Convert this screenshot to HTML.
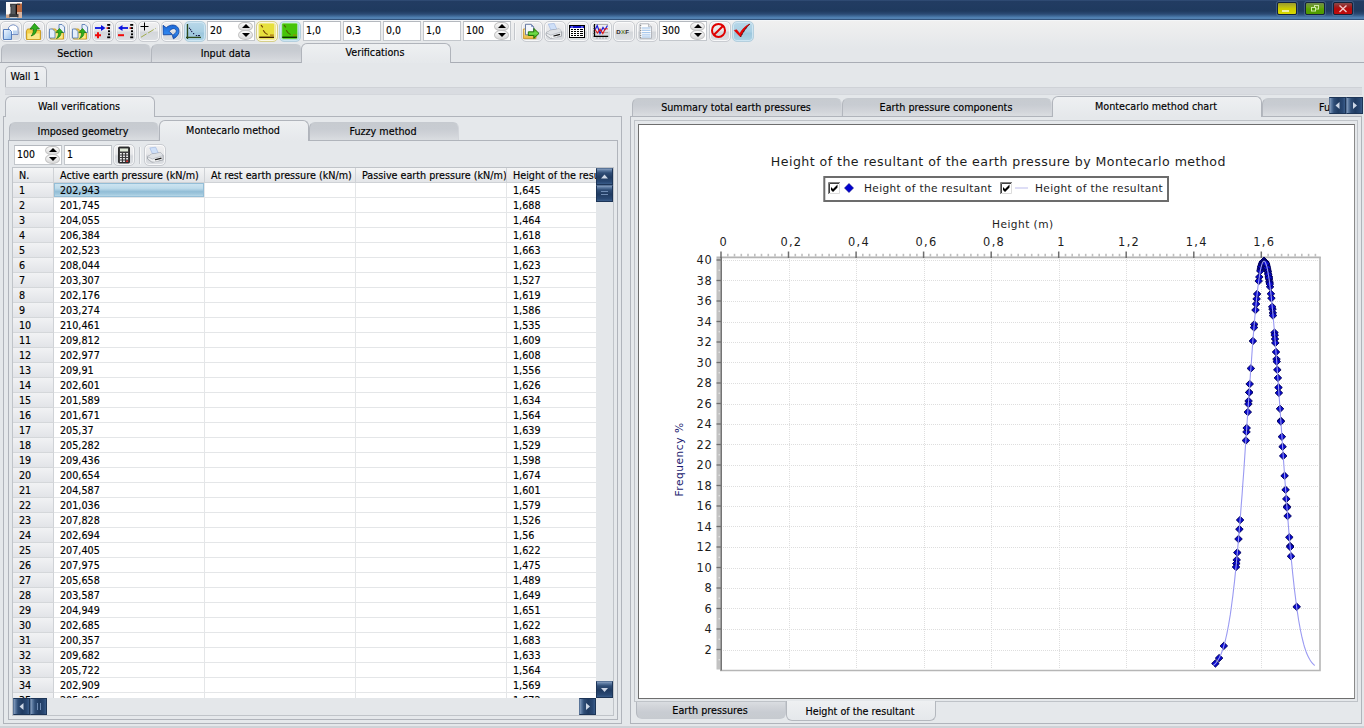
<!DOCTYPE html>
<html lang="en"><head><meta charset="utf-8"><title>Wall verifications - Montecarlo method</title>
<style>
*{box-sizing:border-box;margin:0;padding:0}
html,body{width:1364px;height:728px;overflow:hidden;background:#e4e7eb}
body{font-family:"DejaVu Sans Condensed","Liberation Sans",sans-serif;font-size:10.7px;color:#000;-webkit-text-stroke:.15px #000}
#app{position:relative;width:1364px;height:728px;overflow:hidden;background:#e4e7ea}
.abs{position:absolute}
/* title bar */
#title{position:absolute;left:0;top:0;width:1364px;height:20px;background:linear-gradient(#34507a 0,#223c62 1.500px,#1f3a5f 11px,#2b4a74 14px,#4877a8 17px,#5a8bbd 18.300px,#33557f 19.300px,#2f5078 20px)}
#tline{position:absolute;left:0;top:20px;width:1364px;height:1px;background:#f4f6f8}
.wb{position:absolute;top:2px;width:20px;height:13px;border:1px solid #14233a;border-radius:2px;box-shadow:0 0 0 1px rgba(120,150,190,.35)}
/* toolbar */
#tbbg{position:absolute;left:0;top:21px;width:1364px;height:28px;background:linear-gradient(#f0f0f0,#e4e7ea)}
.tb{position:absolute;top:21px;width:22px;height:21px;border:1px solid #c9ccd1;border-radius:5px;background:linear-gradient(#f0f0f1 0,#e7e8ea 45%,#d4d7db 55%,#dcdfe3 100%);box-shadow:inset 0 0 0 1px rgba(255,255,255,.75)}
.tb.on{background:linear-gradient(#b9d8e9 0,#a9cfe3 50%,#9dc7dd 60%,#acd2e5 100%);border-color:#b4cfde;box-shadow:inset 0 0 0 1px rgba(220,238,248,.7)}
.tb svg{position:absolute;left:0;top:0}
.inp{position:absolute;background:#fff;border:1px solid #c3c7cc;border-top-color:#b4b8be;height:20px;line-height:17px;padding-left:2px;font-size:10.4px;color:#000}
.spin{position:absolute;width:15px;height:10px;border:1px solid #c4c4c4;border-radius:7px/5px;background:linear-gradient(#fcfcfc,#d8d8d8)}
.spin:after{content:"";position:absolute;left:2.5px;top:2px;border:4px solid transparent}
.spin.up:after{border-bottom:4.5px solid #000;border-top:0;top:1px}
.spin.dn:after{border-top:4.5px solid #000;border-bottom:0;top:2px}
/* tabs */
.tab{position:absolute;text-align:center;border:1px solid #c6cad0;border-left-color:#b3b7be;border-right-color:#d3d6db;border-bottom:none;border-radius:6px 6px 0 0;background:linear-gradient(#c7cbd0 0,#c8ccd2 35%,#d1d4d9 70%,#dadde1 100%);color:#000;white-space:nowrap;overflow:hidden;padding-right:2px}
.tab.sel{background:linear-gradient(#eef0f2,#e5e8eb);border-color:#b0b4bb}
.hline{position:absolute;height:1px;background:#a9adb5}
.vline{position:absolute;width:1px;background:#b4b8be}
.pane{position:absolute;border:1px solid #b0b4bb;background:#e5e8eb}
/* table */
#grid{position:absolute;left:13px;top:168px;width:583px;height:530px;background:#fff;overflow:hidden}
#ghead{position:absolute;left:0;top:0;width:583px;height:15px;background:linear-gradient(#f4f5f6,#e3e5e8);border-bottom:1px solid #cfd2d6}
#ghead div{position:absolute;top:0;height:15px;line-height:16px;padding-left:6px;border-right:1px solid #cfd2d6;white-space:nowrap;overflow:hidden}
#gbody{position:absolute;left:0;top:15px;width:583px;height:515px;overflow:hidden}
.tr{position:absolute;left:0;width:583px;height:15px}
.tr div{position:absolute;top:0;height:15px;line-height:16px;padding-left:6px;border-right:1px solid #e4e6e8;border-bottom:1px solid #e4e6e8;white-space:nowrap;overflow:hidden}
.c0{left:0;width:41px;background:linear-gradient(#f1f2f4,#e2e4e8);border-right-color:#cfd2d6 !important;border-bottom-color:#d4d7da !important}
.c1{left:41px;width:151px}
.c2{left:192px;width:151px}
.c3{left:343px;width:151px}
.c4{left:494px;width:89px;border-right:none !important}
.cs{background:linear-gradient(#d0e6f2 0,#bddbeb 38%,#92bdd6 62%,#a2c9de 80%,#c2dfee 100%);box-shadow:inset 0 0 0 1px #94bed7}
/* scrollbars */
.sbtn{position:absolute;width:16px;height:16px;background:linear-gradient(#859cbc 0,#5c7aa1 10%,#2f4d76 26%,#203b61 55%,#294873 85%,#3a5c89 100%);border:1px solid #1d3557;border-top-color:#5a7599}

.sbh{background:linear-gradient(90deg,#859cbc 0,#5c7aa1 10%,#2f4d76 26%,#203b61 55%,#294873 85%,#3a5c89 100%);border-top-color:#1d3557;border-left-color:#5a7599}

</style></head>
<body>
<div id="app">
<div id="title"></div><div id="tline"></div>
<svg class="abs" style="left:6px;top:2px" width="16" height="16" viewBox="0 0 16 16">
<rect x="0" y="0" width="16" height="16" fill="#fbfaf9"/>
<rect x="11" y="1.500" width="5" height="9" fill="#b9683f"/>
<rect x="11" y="10" width="5" height="6" fill="#d9b49e"/>
<rect x="0" y="12.500" width="4" height="3.500" fill="#cfa78c"/>
<path d="M4 1.700h10v1.300h-3.500V12h2v3.200H3.300V12l1.200-.500V5H4.200z" fill="#3a3d40"/>
<rect x="5.500" y="3" width="3.500" height="9" fill="#55595c"/>
<rect x="10" y="2.500" width="1" height="10" fill="#1a0c08"/>
</svg>
<div class="wb" style="left:1277px;background:linear-gradient(#9a9a2a 0,#b7b71a 30%,#caca00 50%,#d8d800 100%)"><div class="abs" style="left:4px;top:7px;width:7px;height:2px;background:#f0f0a8"></div></div>
<div class="wb" style="left:1305px;background:linear-gradient(#6f8a4a 0,#6aa01c 35%,#58a000 55%,#4f9a00 100%)">
<svg class="abs" style="left:0;top:0" width="18" height="11" viewBox="0 0 18 11"><rect x="8.5" y="2.5" width="4" height="3.5" fill="none" stroke="#cfe8a8" stroke-width="1"/><rect x="5.5" y="4.5" width="4" height="3.5" fill="#4f9a00" stroke="#cfe8a8" stroke-width="1"/></svg></div>
<div class="wb" style="left:1333px;background:linear-gradient(#8a4a4a 0,#a01c1c 35%,#b40a0a 55%,#c00c0c 100%)">
<svg class="abs" style="left:0;top:0" width="18" height="11" viewBox="0 0 18 11"><path d="M5.5 2.5l7 6.5M12.5 2.5l-7 6.5" stroke="#f3c9c9" stroke-width="1.4" fill="none"/></svg></div>

<div id="tbbg"></div>
<div class="tb" style="left:0px;top:21px;"><svg width="22" height="21" viewBox="0 0 22 21" style="left:-1px;top:-1px"><defs><linearGradient id="pg" x1="0" y1="0" x2="1" y2="1"><stop offset="0" stop-color="#f4f8fe"/><stop offset="1" stop-color="#8fbcec"/></linearGradient></defs><path d="M8.5 13.5V6.5Q13 1 18 6.5v7z" fill="#fff" stroke="#6a86bd" stroke-width=".9"/><path d="M13 9.5h4v3.5h-4z" fill="#bcd4f0"/><path d="M3.5 8.5h6l2 2v8h-8z" fill="url(#pg)" stroke="#4a74b8" stroke-width=".9"/></svg></div>
<div class="tb" style="left:23px;top:21px;"><svg width="22" height="21" viewBox="0 0 22 21" style="left:-1px;top:-1px"><path d="M3.5 10l1-2h4l1 1.5h8v9.0h-14z" fill="#f3d04a" stroke="#c9991a" stroke-width=".9"/><rect x="4.5" y="12.5" width="12" height="5.5" fill="#fbe88a"/><path d="M11.5 2.5l5 5.5h-3c0 4-2 6-5.5 7 2-2 2.5-4 2.5-7h-3.5z" fill="#2fae1e" stroke="#167a0c" stroke-width=".8"/></svg></div>
<div class="tb" style="left:46px;top:21px;"><svg width="22" height="21" viewBox="0 0 22 21" style="left:-1px;top:-1px"><path d="M4.5 10l1-2h4l1 1.5h7v8.5h-13z" fill="#f3d04a" stroke="#c9991a" stroke-width=".9"/><rect x="5.5" y="12.5" width="11" height="5" fill="#fbe88a"/><path d="M13 3.5h3.0l2.5 2.5v5.5h-5.5z" fill="#e8f0fb" stroke="#5b7fb5" stroke-width=".9"/><path d="M3.5 8h3.0l2.5 2.5v6.5h-5.5z" fill="#e4eefb" stroke="#5b7fb5" stroke-width=".9"/><path d="M13.5 7.5l3.5 4h-2c0 3-1.5 5-4.5 6 1.5-1.5 2-3.5 2-6h-2.5z" fill="#2fae1e" stroke="#167a0c" stroke-width=".7"/></svg></div>
<div class="tb" style="left:69px;top:21px;"><svg width="22" height="21" viewBox="0 0 22 21" style="left:-1px;top:-1px"><path d="M4.5 10l1-2h4l1 1.5h7v8.5h-13z" fill="#f3d04a" stroke="#c9991a" stroke-width=".9"/><rect x="5.5" y="12.5" width="11" height="5" fill="#fbe88a"/><path d="M13 3.5h3.0l2.5 2.5v5.5h-5.5z" fill="#e8f0fb" stroke="#5b7fb5" stroke-width=".9"/><path d="M3.5 8h3.0l2.5 2.5v6.5h-5.5z" fill="#e4eefb" stroke="#5b7fb5" stroke-width=".9"/><path d="M13.5 7.5l3.5 4h-2c0 3-1.5 5-4.5 6 1.5-1.5 2-3.5 2-6h-2.5z" fill="#2fae1e" stroke="#167a0c" stroke-width=".7"/></svg></div>
<div class="tb" style="left:92px;top:21px;"><svg width="22" height="21" viewBox="0 0 22 21" style="left:-1px;top:-1px"><path d="M3 7h8" stroke="#0a14e0" stroke-width="1.8"/><path d="M9 4l4.5 3L9 10z" fill="#0a14e0"/><path d="M3 14.2h6M6 11.2v6" stroke="#f00a0a" stroke-width="2"/><rect x="14.6" y="6.2" width="1.8" height="1.8" fill="#d01010"/><rect x="15.2" y="3" width="3" height="1.8" fill="#000"/><rect x="16" y="6.2" width="2" height="1.8" fill="#000"/><rect x="16" y="9.3" width="2" height="1.8" fill="#000"/><rect x="16" y="12.4" width="2" height="1.8" fill="#000"/><rect x="15.2" y="15.4" width="3" height="1.8" fill="#000"/></svg></div>
<div class="tb" style="left:115px;top:21px;"><svg width="22" height="21" viewBox="0 0 22 21" style="left:-1px;top:-1px"><path d="M5 7h8" stroke="#0a14e0" stroke-width="1.8"/><path d="M7.5 4L3 7l4.5 3z" fill="#0a14e0"/><path d="M3 14.2h6" stroke="#f00a0a" stroke-width="2"/><rect x="14.6" y="6.2" width="1.8" height="1.8" fill="#d01010"/><rect x="15.2" y="3" width="3" height="1.8" fill="#000"/><rect x="16" y="6.2" width="2" height="1.8" fill="#000"/><rect x="16" y="9.3" width="2" height="1.8" fill="#000"/><rect x="16" y="12.4" width="2" height="1.8" fill="#000"/><rect x="15.2" y="15.4" width="3" height="1.8" fill="#000"/></svg></div>
<div class="tb" style="left:138px;top:21px;"><svg width="22" height="21" viewBox="0 0 22 21" style="left:-1px;top:-1px"><path d="M2.500 5.500h8M6.500 1.500v8" stroke="#000" stroke-width="1"/><path d="M3 16.200L17.800 7.300" stroke="#9aa63c" stroke-width=".9" stroke-dasharray="6.500 1.800"/></svg></div>
<div class="tb" style="left:161px;top:21px;"><svg width="22" height="21" viewBox="0 0 22 21" style="left:-1px;top:-1px"><defs><linearGradient id="ug" x1="0" y1="0" x2="0" y2="1"><stop offset="0" stop-color="#1a66d6"/><stop offset=".6" stop-color="#2f86ee"/><stop offset="1" stop-color="#1458c4"/></linearGradient></defs><path d="M2 4.300L2.300 13.800L11.500 13.600L8.200 10.400C10 7.600 13.600 6.600 15 9C16 11 14 13 11.400 14.400L12.400 17.800C17 15.500 19 11 17.500 7.500C15.500 3.300 9.500 2.800 5.200 6.700z" fill="url(#ug)" stroke="#0a3f9e" stroke-width=".8" stroke-linejoin="round"/></svg></div>
<div class="tb on" style="left:184px;top:21px;"><svg width="22" height="21" viewBox="0 0 22 21" style="left:-1px;top:-1px"><path d="M3.500 3v15" stroke="#2f4a1a" stroke-width="1.300"/><path d="M2 16.400h15" stroke="#2f4a1a" stroke-width="1.300"/><rect x="4.900" y="6.700" width="1.200" height="1.200" fill="#1a1a4a"/><rect x="6" y="8.100" width="1.200" height="1.200" fill="#1a1a4a"/><rect x="7.100" y="9.900" width="1.200" height="1.200" fill="#1a1a4a"/><rect x="9" y="12" width="1.200" height="1.200" fill="#1a1a4a"/><rect x="11.800" y="14" width="1.200" height="1.100" fill="#1a1a4a"/><rect x="13.800" y="14" width="2.200" height="1.100" fill="#1a1a4a"/></svg></div>
<div class="inp" style="left:207px;top:21px;width:48px">20</div><div class="spin up" style="left:238px;top:22px;height:9px"></div><div class="spin dn" style="left:238px;top:30px;height:10px"></div>
<div class="tb" style="left:256px;top:21px;background:#efe79a;border-color:#d6cf8a"><svg width="22" height="21" viewBox="0 0 22 21" style="left:-1px;top:-1px"><rect x="2.600" y="1.800" width="16" height="16.400" rx="1.500" fill="#f6f3c0"/><rect x="3.200" y="2.400" width="15" height="15.400" rx="1" fill="#e7e03c"/><path d="M5 4L6.800 6.400M7.200 9.200Q9 12.500 11.600 13.600" stroke="#6a3a00" stroke-width="1.100" fill="none"/><path d="M14 14.100h3.800" stroke="#a86a10" stroke-width="1.100"/><path d="M3.200 16.300H18" stroke="#3a1a00" stroke-width="1.400"/></svg></div>
<div class="tb on" style="left:279px;top:21px;"><svg width="22" height="21" viewBox="0 0 22 21" style="left:-1px;top:-1px"><rect x="2.600" y="1.800" width="16" height="16.400" rx="1.500" fill="#bfeeb0"/><rect x="3.200" y="2.400" width="15" height="15.400" rx="1" fill="#46c40a"/><path d="M5 4L6.800 6.400M7.200 9.200Q9 12.500 11.600 13.600" stroke="#4a5a00" stroke-width="1.100" fill="none"/><path d="M14 14.100h3.800" stroke="#a08a00" stroke-width="1.100"/><path d="M3.200 16.300H18" stroke="#0a3600" stroke-width="1.400"/></svg></div>
<div class="inp" style="left:303px;top:21px;width:38px">1,0</div>
<div class="inp" style="left:343px;top:21px;width:38px">0,3</div>
<div class="inp" style="left:383px;top:21px;width:38px">0,0</div>
<div class="inp" style="left:423px;top:21px;width:38px">1,0</div>
<div class="inp" style="left:463px;top:21px;width:48px">100</div><div class="spin up" style="left:494px;top:22px;height:9px"></div><div class="spin dn" style="left:494px;top:30px;height:10px"></div>
<div class="abs" style="left:514px;top:23px;width:1px;height:17px;background:#c4c7cc"></div><div class="abs" style="left:515px;top:23px;width:1px;height:17px;background:#f6f7f8"></div>
<div class="tb" style="left:521px;top:21px;"><svg width="22" height="21" viewBox="0 0 22 21" style="left:-1px;top:-1px"><defs><linearGradient id="fg" x1="0" y1="0" x2="0" y2="1"><stop offset="0" stop-color="#fbf0b8"/><stop offset="1" stop-color="#eab63a"/></linearGradient><linearGradient id="gg" x1="0" y1="0" x2="0" y2="1"><stop offset="0" stop-color="#3faa1a"/><stop offset=".5" stop-color="#6fdc48"/><stop offset="1" stop-color="#2f9a12"/></linearGradient></defs><path d="M2.400 8h3l1 1.500H15V17.600H2.400z" fill="url(#fg)" stroke="#c8962a" stroke-width=".9"/><path d="M4.500 3.300h5.700l2.500 2.500v8H4.500z" fill="#f4f7fc" stroke="#5a6e9a" stroke-width=".9"/><path d="M10.200 3.300v2.500h2.500z" fill="#6a82b8"/><path d="M7.300 10.800h5.500V7.400l5.200 5-5.200 5V14.500H7.300z" fill="url(#gg)" stroke="#1a6a00" stroke-width=".9" stroke-linejoin="round"/></svg></div>
<div class="tb" style="left:544px;top:21px;"><svg width="22" height="21" viewBox="0 0 22 21" style="left:-1px;top:-1px"><path d="M4.300 3.100L10.200 2.400L12.800 8.300L6.900 9z" fill="#cfe0f8" stroke="#9ab4e0" stroke-width=".6"/><path d="M2.100 11.900L6.200 9.400L15.300 7.900L17.500 10.500V15.200L6.500 17.400L2.100 14.200z" fill="#eef0f2" stroke="#8c9098" stroke-width=".7"/><path d="M6.200 9.400L15.300 7.900L17.500 10.500L6.800 13.900L2.100 11.900z" fill="#dfe2e6"/><path d="M2.100 11.900L6.800 14.200L17.500 10.800" fill="none" stroke="#a0a4ac" stroke-width=".6"/><path d="M9.500 15.100L16 13.300" stroke="#1a1a1a" stroke-width="1.300"/><path d="M8 16.600l5-.9" stroke="#fff" stroke-width=".8"/></svg></div>
<div class="tb" style="left:567px;top:21px;"><svg width="22" height="21" viewBox="0 0 22 21" style="left:-1px;top:-1px"><rect x="2.500" y="4.500" width="15" height="12" fill="#fff" stroke="#000" stroke-width="1"/><rect x="3" y="5" width="14" height="2" fill="#1010c8"/><rect x="4" y="5.500" width="2" height="1" fill="#a8b8ff"/><rect x="14" y="5.500" width="2" height="1" fill="#a8b8ff"/><rect x="4" y="8" width="2" height="1" fill="#000"/><rect x="7" y="8" width="2" height="1" fill="#000"/><rect x="10" y="8" width="2" height="1" fill="#000"/><rect x="13" y="8" width="3" height="1" fill="#000"/><rect x="4" y="10" width="2" height="1" fill="#000"/><rect x="7" y="10" width="2" height="1" fill="#000"/><rect x="10" y="10" width="2" height="1" fill="#000"/><rect x="13" y="10" width="3" height="1" fill="#000"/><rect x="4" y="12" width="2" height="1" fill="#000"/><rect x="7" y="12" width="2" height="1" fill="#000"/><rect x="10" y="12" width="2" height="1" fill="#000"/><rect x="13" y="12" width="3" height="1" fill="#000"/><rect x="4" y="14" width="2" height="1" fill="#000"/><rect x="7" y="14" width="2" height="1" fill="#000"/><rect x="10" y="14" width="2" height="1" fill="#000"/><rect x="13" y="14" width="3" height="1" fill="#000"/></svg></div>
<div class="tb" style="left:590px;top:21px;"><svg width="22" height="21" viewBox="0 0 22 21" style="left:-1px;top:-1px"><path d="M4.500 3v12.800M3.600 15.300h14.600" stroke="#000" stroke-width="1.200"/><path d="M3 5h1.500M3 7.500h1.500M3 10h1.500M3 12.500h1.500M7 16.500v1M10 16.500v1M13 16.500v1M16 16.500v1" stroke="#555" stroke-width=".7"/><path d="M5 3.500h13M5 11.500h13" stroke="#a0a0a0" stroke-width=".8"/><path d="M5 9l2.200-4.500 2.800 8 3-6 1.800 2.500 2.700-4.500" stroke="#1a1ad8" stroke-width="1.200" fill="none"/><path d="M5 8.500l2.500 3.500 2.500-4 2.800 4.500 2.500-5 2.500.500" stroke="#e01a1a" stroke-width="1.100" fill="none"/></svg></div>
<div class="tb" style="left:613px;top:21px;"><svg width="22" height="21" viewBox="0 0 22 21" style="left:-1px;top:-1px"><text x="9.800" y="12.800" text-anchor="middle" font-family="Liberation Sans,sans-serif" font-size="6.200" font-weight="bold" letter-spacing=".3"><tspan fill="#2a2a2a">D</tspan><tspan fill="#6a8a3a">X</tspan><tspan fill="#2a2a2a">F</tspan></text></svg></div>
<div class="tb" style="left:636px;top:21px;"><svg width="22" height="21" viewBox="0 0 22 21" style="left:-1px;top:-1px"><path d="M4 2.800h8.500l3 3v11.500H4z" fill="#fdfdfd" stroke="#a4a8b0" stroke-width=".8"/><path d="M12.500 2.800v3h3" fill="#e4e4e4" stroke="#a4a8b0" stroke-width=".7"/><path d="M5.800 7h8.700" stroke="#a8c8ec" stroke-width="1.200"/><path d="M5.800 9.3h8.700" stroke="#a8c8ec" stroke-width="1.200"/><path d="M5.800 11.6h8.700" stroke="#a8c8ec" stroke-width="1.200"/><path d="M5.800 13.9h8.700" stroke="#a8c8ec" stroke-width="1.200"/><path d="M5.800 16h8.700" stroke="#a8c8ec" stroke-width="1.200"/><rect x="4" y="4" width="1.200" height="1" fill="#8a8a8a"/><rect x="4" y="6.5" width="1.200" height="1" fill="#8a8a8a"/><rect x="4" y="9" width="1.200" height="1" fill="#8a8a8a"/><rect x="4" y="11.5" width="1.200" height="1" fill="#8a8a8a"/><rect x="4" y="14" width="1.200" height="1" fill="#8a8a8a"/><rect x="4" y="16" width="1.200" height="1" fill="#8a8a8a"/></svg></div>
<div class="inp" style="left:659px;top:21px;width:48px">300</div><div class="spin up" style="left:690px;top:22px;height:9px"></div><div class="spin dn" style="left:690px;top:30px;height:10px"></div>
<div class="tb" style="left:709px;top:21px;"><svg width="22" height="21" viewBox="0 0 22 21" style="left:-1px;top:-1px"><circle cx="9.500" cy="9.400" r="6.500" fill="none" stroke="#e00000" stroke-width="2"/><path d="M4.800 14L14.200 4.800" stroke="#e00000" stroke-width="2"/></svg></div>
<div class="tb on" style="left:732px;top:21px;"><svg width="22" height="21" viewBox="0 0 22 21" style="left:-1px;top:-1px"><path d="M2.200 9.400L4.600 8.700L7.800 12.500C10 8.500 13 5 17.600 3C14.200 6.500 11.200 10.500 8.500 15.900z" fill="#ee0000" stroke="#c00000" stroke-width=".5" stroke-linejoin="round"/><path d="M8.700 15.800C11.300 10.700 14.300 6.700 17.600 3.200" fill="none" stroke="#2a0000" stroke-width=".9" stroke-dasharray="1.2 .6"/></svg></div>
<div class="hline" style="left:0;top:62px;width:1364px"></div>
<div class="tab" style="left:1px;top:44px;width:150px;height:18px;line-height:17px;">Section</div>
<div class="tab" style="left:151px;top:44px;width:151px;height:18px;line-height:17px;">Input data</div>
<div class="tab sel" style="left:301px;top:43px;width:150px;height:20px;line-height:19px;line-height:17px">Verifications</div>
<div class="tab sel" style="left:5px;top:66px;width:42px;height:21px;line-height:20px;line-height:19px;border-radius:5px 5px 0 0">Wall 1</div>
<div class="abs" style="left:5px;top:87px;width:1357px;height:8px;background:#d9dce1;border-top:1px solid #cfd2d7;border-bottom:1px solid #d4d7dc"></div>
<div class="pane" style="left:3px;top:116px;width:619px;height:608px"></div>
<div class="tab sel" style="left:5px;top:96px;width:150px;height:21px;line-height:20px;line-height:19px">Wall verifications</div>
<div class="pane" style="left:8px;top:140px;width:610px;height:580px"></div>
<div class="tab" style="left:9px;top:122px;width:150px;height:18px;line-height:17px;">Imposed geometry</div>
<div class="tab" style="left:309px;top:122px;width:150px;height:18px;line-height:17px;">Fuzzy method</div>
<div class="tab sel" style="left:159px;top:120px;width:150px;height:21px;line-height:20px;line-height:19px">Montecarlo method</div>
<div class="inp" style="left:14px;top:145px;width:48px">100</div><div class="spin up" style="left:45px;top:146px;height:9px"></div><div class="spin dn" style="left:45px;top:154px;height:10px"></div>
<div class="inp" style="left:64px;top:145px;width:48px">1</div>
<div class="tb" style="left:113px;top:144px;height:22px"><svg width="22" height="21" viewBox="0 0 22 21" style="left:-1px;top:-1px"><g transform="translate(0 .500)"><rect x="5.500" y="2.500" width="11" height="16" rx="1" fill="#3a3a3c" stroke="#111" stroke-width=".8"/><rect x="7" y="4" width="8" height="3" fill="#dfe8d8"/><rect x="7" y="8.5" width="1.800" height="1.500" fill="#f2f2f2"/><rect x="10.1" y="8.5" width="1.800" height="1.500" fill="#f2f2f2"/><rect x="13.2" y="8.5" width="1.800" height="1.500" fill="#f2f2f2"/><rect x="7" y="11" width="1.800" height="1.500" fill="#f2f2f2"/><rect x="10.1" y="11" width="1.800" height="1.500" fill="#f2f2f2"/><rect x="13.2" y="11" width="1.800" height="1.500" fill="#f2f2f2"/><rect x="7" y="13.5" width="1.800" height="1.500" fill="#f2f2f2"/><rect x="10.1" y="13.5" width="1.800" height="1.500" fill="#f2f2f2"/><rect x="13.2" y="13.5" width="1.800" height="1.500" fill="#f2f2f2"/><rect x="7" y="16" width="1.800" height="1.500" fill="#f2f2f2"/><rect x="10.100" y="16" width="1.800" height="1.500" fill="#f2f2f2"/><rect x="13.200" y="16" width="1.800" height="1.500" fill="#e03030"/></g></svg></div>
<div class="abs" style="left:139px;top:147px;width:1px;height:17px;background:#c4c7cc"></div><div class="abs" style="left:140px;top:147px;width:1px;height:17px;background:#f6f7f8"></div>
<div class="tb" style="left:144px;top:144px;height:22px"><svg width="22" height="21" viewBox="0 0 22 21" style="left:-1px;top:-1px"><g transform="translate(1.500 .800)"><path d="M4.300 3.100L10.200 2.400L12.800 8.300L6.900 9z" fill="#cfe0f8" stroke="#9ab4e0" stroke-width=".6"/><path d="M2.100 11.900L6.200 9.400L15.300 7.900L17.500 10.500V15.200L6.500 17.400L2.100 14.200z" fill="#eef0f2" stroke="#8c9098" stroke-width=".7"/><path d="M6.200 9.400L15.300 7.900L17.500 10.500L6.800 13.900L2.100 11.900z" fill="#dfe2e6"/><path d="M2.100 11.900L6.800 14.200L17.500 10.800" fill="none" stroke="#a0a4ac" stroke-width=".6"/><path d="M9.500 15.100L16 13.300" stroke="#1a1a1a" stroke-width="1.300"/><path d="M8 16.600l5-.9" stroke="#fff" stroke-width=".8"/></g></svg></div>
<div class="abs" style="left:12px;top:167px;width:602px;height:549px;border:1px solid #c0c4c9;background:#e4e7ea"></div>
<div id="grid"><div id="ghead"><div style="left:0;width:41px">N.</div><div style="left:41px;width:151px">Active earth pressure (kN/m)</div><div style="left:192px;width:151px">At rest earth pressure (kN/m)</div><div style="left:343px;width:151px">Passive earth pressure (kN/m)</div><div style="left:494px;width:89px;border-right:none">Height of the resultant (m)</div></div>
<div id="gbody">
<div class="tr" style="top:0px"><div class="c0">1</div><div class="c1 cs">202,943</div><div class="c2"></div><div class="c3"></div><div class="c4">1,645</div></div>
<div class="tr" style="top:15px"><div class="c0">2</div><div class="c1">201,745</div><div class="c2"></div><div class="c3"></div><div class="c4">1,688</div></div>
<div class="tr" style="top:30px"><div class="c0">3</div><div class="c1">204,055</div><div class="c2"></div><div class="c3"></div><div class="c4">1,464</div></div>
<div class="tr" style="top:45px"><div class="c0">4</div><div class="c1">206,384</div><div class="c2"></div><div class="c3"></div><div class="c4">1,618</div></div>
<div class="tr" style="top:60px"><div class="c0">5</div><div class="c1">202,523</div><div class="c2"></div><div class="c3"></div><div class="c4">1,663</div></div>
<div class="tr" style="top:75px"><div class="c0">6</div><div class="c1">208,044</div><div class="c2"></div><div class="c3"></div><div class="c4">1,623</div></div>
<div class="tr" style="top:90px"><div class="c0">7</div><div class="c1">203,307</div><div class="c2"></div><div class="c3"></div><div class="c4">1,527</div></div>
<div class="tr" style="top:105px"><div class="c0">8</div><div class="c1">202,176</div><div class="c2"></div><div class="c3"></div><div class="c4">1,619</div></div>
<div class="tr" style="top:120px"><div class="c0">9</div><div class="c1">203,274</div><div class="c2"></div><div class="c3"></div><div class="c4">1,586</div></div>
<div class="tr" style="top:135px"><div class="c0">10</div><div class="c1">210,461</div><div class="c2"></div><div class="c3"></div><div class="c4">1,535</div></div>
<div class="tr" style="top:150px"><div class="c0">11</div><div class="c1">209,812</div><div class="c2"></div><div class="c3"></div><div class="c4">1,609</div></div>
<div class="tr" style="top:165px"><div class="c0">12</div><div class="c1">202,977</div><div class="c2"></div><div class="c3"></div><div class="c4">1,608</div></div>
<div class="tr" style="top:180px"><div class="c0">13</div><div class="c1">209,91</div><div class="c2"></div><div class="c3"></div><div class="c4">1,556</div></div>
<div class="tr" style="top:195px"><div class="c0">14</div><div class="c1">202,601</div><div class="c2"></div><div class="c3"></div><div class="c4">1,626</div></div>
<div class="tr" style="top:210px"><div class="c0">15</div><div class="c1">201,589</div><div class="c2"></div><div class="c3"></div><div class="c4">1,634</div></div>
<div class="tr" style="top:225px"><div class="c0">16</div><div class="c1">201,671</div><div class="c2"></div><div class="c3"></div><div class="c4">1,564</div></div>
<div class="tr" style="top:240px"><div class="c0">17</div><div class="c1">205,37</div><div class="c2"></div><div class="c3"></div><div class="c4">1,639</div></div>
<div class="tr" style="top:255px"><div class="c0">18</div><div class="c1">205,282</div><div class="c2"></div><div class="c3"></div><div class="c4">1,529</div></div>
<div class="tr" style="top:270px"><div class="c0">19</div><div class="c1">209,436</div><div class="c2"></div><div class="c3"></div><div class="c4">1,598</div></div>
<div class="tr" style="top:285px"><div class="c0">20</div><div class="c1">200,654</div><div class="c2"></div><div class="c3"></div><div class="c4">1,674</div></div>
<div class="tr" style="top:300px"><div class="c0">21</div><div class="c1">204,587</div><div class="c2"></div><div class="c3"></div><div class="c4">1,601</div></div>
<div class="tr" style="top:315px"><div class="c0">22</div><div class="c1">201,036</div><div class="c2"></div><div class="c3"></div><div class="c4">1,579</div></div>
<div class="tr" style="top:330px"><div class="c0">23</div><div class="c1">207,828</div><div class="c2"></div><div class="c3"></div><div class="c4">1,526</div></div>
<div class="tr" style="top:345px"><div class="c0">24</div><div class="c1">202,694</div><div class="c2"></div><div class="c3"></div><div class="c4">1,56</div></div>
<div class="tr" style="top:360px"><div class="c0">25</div><div class="c1">207,405</div><div class="c2"></div><div class="c3"></div><div class="c4">1,622</div></div>
<div class="tr" style="top:375px"><div class="c0">26</div><div class="c1">207,975</div><div class="c2"></div><div class="c3"></div><div class="c4">1,475</div></div>
<div class="tr" style="top:390px"><div class="c0">27</div><div class="c1">205,658</div><div class="c2"></div><div class="c3"></div><div class="c4">1,489</div></div>
<div class="tr" style="top:405px"><div class="c0">28</div><div class="c1">203,587</div><div class="c2"></div><div class="c3"></div><div class="c4">1,649</div></div>
<div class="tr" style="top:420px"><div class="c0">29</div><div class="c1">204,949</div><div class="c2"></div><div class="c3"></div><div class="c4">1,651</div></div>
<div class="tr" style="top:435px"><div class="c0">30</div><div class="c1">202,685</div><div class="c2"></div><div class="c3"></div><div class="c4">1,622</div></div>
<div class="tr" style="top:450px"><div class="c0">31</div><div class="c1">200,357</div><div class="c2"></div><div class="c3"></div><div class="c4">1,683</div></div>
<div class="tr" style="top:465px"><div class="c0">32</div><div class="c1">209,682</div><div class="c2"></div><div class="c3"></div><div class="c4">1,633</div></div>
<div class="tr" style="top:480px"><div class="c0">33</div><div class="c1">205,722</div><div class="c2"></div><div class="c3"></div><div class="c4">1,564</div></div>
<div class="tr" style="top:495px"><div class="c0">34</div><div class="c1">202,909</div><div class="c2"></div><div class="c3"></div><div class="c4">1,569</div></div>
<div class="tr" style="top:510px"><div class="c0">35</div><div class="c1">205,886</div><div class="c2"></div><div class="c3"></div><div class="c4">1,672</div></div>
</div></div>
<div class="sbtn" style="left:596px;top:168px;width:17px;height:17px"><svg class="abs" style="left:0;top:0" width="14" height="14" viewBox="0 0 14 14"><path d="M4 9.500h7l-3.500-4z" fill="#cdd7e6"/></svg></div>
<div class="sbtn" style="left:596px;top:185px;width:17px;height:17px"><div class="abs" style="left:4px;top:5px;width:7px;height:1px;background:#6f8cb4"></div><div class="abs" style="left:4px;top:8px;width:7px;height:1px;background:#6f8cb4"></div></div>
<div class="sbtn" style="left:596px;top:681px;width:17px;height:17px"><svg class="abs" style="left:0;top:0" width="14" height="14" viewBox="0 0 14 14"><path d="M4 6h7l-3.500 4z" fill="#cdd7e6"/></svg></div>
<div class="sbtn sbh" style="left:13px;top:698px;width:17px;height:17px"><svg class="abs" style="left:0;top:0" width="14" height="14" viewBox="0 0 14 14"><path d="M9.500 4v7l-4-3.500z" fill="#cdd7e6"/></svg></div>
<div class="sbtn sbh" style="left:30px;top:698px;width:17px;height:17px"><div class="abs" style="left:6px;top:4px;width:1px;height:7px;background:#6f8cb4"></div><div class="abs" style="left:9px;top:4px;width:1px;height:7px;background:#6f8cb4"></div></div>
<div class="sbtn sbh" style="left:579px;top:698px;width:17px;height:17px"><svg class="abs" style="left:0;top:0" width="14" height="14" viewBox="0 0 14 14"><path d="M6 4v7l4-3.500z" fill="#cdd7e6"/></svg></div>
<div class="pane" style="left:630px;top:116px;width:732px;height:608px"></div>
<div class="tab" style="left:632px;top:98px;width:210px;height:18px;line-height:17px;">Summary total earth pressures</div>
<div class="tab" style="left:842px;top:98px;width:210px;height:18px;line-height:17px;">Earth pressure components</div>
<div class="tab" style="left:1262px;top:98px;width:100px;height:18px;line-height:17px;text-align:left"><span style="position:absolute;left:56px">Fuzzy method chart</span></div>
<div class="tab sel" style="left:1052px;top:96px;width:210px;height:21px;line-height:20px;line-height:19px">Montecarlo method chart</div>
<div class="sbtn sbh" style="left:1329px;top:97px;width:17px;height:17px"><svg class="abs" style="left:0;top:0" width="14" height="14" viewBox="0 0 14 14"><path d="M9.500 4v7l-4-3.500z" fill="#cdd7e6"/></svg></div>
<div class="sbtn sbh" style="left:1346px;top:97px;width:17px;height:17px"><svg class="abs" style="left:0;top:0" width="14" height="14" viewBox="0 0 14 14"><path d="M6 4v7l4-3.500z" fill="#cdd7e6"/></svg></div>
<div class="pane" style="left:634px;top:120px;width:724px;height:582px;border-color:#bfc3c8"></div>
<div class="tab" style="left:636px;top:702px;width:150px;height:17px;line-height:18px;border-radius:0 0 6px 6px;border:1px solid #c6cad0;border-left-color:#b3b7be;border-top:none;background:linear-gradient(#dadde1 0,#d1d4d9 30%,#c8ccd2 65%,#c7cbd0 100%)">Earth pressures</div>
<div class="tab sel" style="left:786px;top:701px;width:150px;height:20px;line-height:21px;border-radius:0 0 6px 6px;border:1px solid #b4b8be;border-top:none">Height of the resultant</div>
<div class="abs" style="left:638px;top:124px;width:717px;height:575px;background:#fff;border:1px solid #6e6e6e;border-right-color:#8a8a8a;overflow:hidden"><svg class="abs" style="left:-639px;top:-125px" width="1364" height="728" viewBox="0 0 1364 728" font-family='"DejaVu Sans","Liberation Sans",sans-serif'>
<text x="998.400" y="165.800" text-anchor="middle" font-size="12.600" letter-spacing=".443" fill="#1c1c1c">Height of the resultant of the earth pressure by Montecarlo method</text>
<rect x="824.300" y="177" width="343.700" height="24" fill="#fff" stroke="#6c6c6c" stroke-width="2"/>
<rect x="828" y="182" width="12" height="12" fill="#fff"/>
<path d="M828 193.5H839.5V182" fill="none" stroke="#dcdcdc" stroke-width="1"/>
<path d="M828.5 194V182.5H840" fill="none" stroke="#808080" stroke-width="1"/>
<path d="M829.5 193V183.5H839" fill="none" stroke="#404040" stroke-width="1"/>
<path d="M831 187v3l2 2 4.500-4.500v-3l-4.500 4.500z" fill="#000"/>
<path d="M844.500 188l4.500-4.500 4.500 4.500-4.500 4.500z" fill="#0000d0" stroke="#00007a" stroke-width=".6"/>
<text x="864" y="192" font-size="10.600" fill="#1c1c1c" letter-spacing=".35">Height of the resultant</text>
<rect x="1000" y="182" width="12" height="12" fill="#fff"/>
<path d="M1000 193.5H1011.5V182" fill="none" stroke="#dcdcdc" stroke-width="1"/>
<path d="M1000.5 194V182.5H1012" fill="none" stroke="#808080" stroke-width="1"/>
<path d="M1001.5 193V183.5H1011" fill="none" stroke="#404040" stroke-width="1"/>
<path d="M1003 187v3l2 2 4.500-4.500v-3l-4.500 4.500z" fill="#000"/>
<path d="M1015 188h13" stroke="#c8c8f0" stroke-width="1.200"/>
<text x="1035" y="192" font-size="10.600" fill="#1c1c1c" letter-spacing=".35">Height of the resultant</text>
<text x="1022.800" y="228" text-anchor="middle" font-size="10.600" fill="#1c1c1c" letter-spacing=".45">Height (m)</text>
<text transform="translate(682.500 459.500) rotate(-90)" text-anchor="middle" font-size="10.600" fill="#1a1a70" letter-spacing=".53">Frequency %</text>
<path d="M789.5 259V669" stroke="#dedede" stroke-width="1" stroke-dasharray="1 1"/>
<path d="M856.5 259V669" stroke="#dedede" stroke-width="1" stroke-dasharray="1 1"/>
<path d="M924.5 259V669" stroke="#dedede" stroke-width="1" stroke-dasharray="1 1"/>
<path d="M991.5 259V669" stroke="#dedede" stroke-width="1" stroke-dasharray="1 1"/>
<path d="M1059.5 259V669" stroke="#dedede" stroke-width="1" stroke-dasharray="1 1"/>
<path d="M1126.5 259V669" stroke="#dedede" stroke-width="1" stroke-dasharray="1 1"/>
<path d="M1194.5 259V669" stroke="#dedede" stroke-width="1" stroke-dasharray="1 1"/>
<path d="M1261.5 259V669" stroke="#dedede" stroke-width="1" stroke-dasharray="1 1"/>
<path d="M723 650.5H1319" stroke="#dedede" stroke-width="1" stroke-dasharray="1 1"/>
<path d="M723 629.5H1319" stroke="#dedede" stroke-width="1" stroke-dasharray="1 1"/>
<path d="M723 608.5H1319" stroke="#dedede" stroke-width="1" stroke-dasharray="1 1"/>
<path d="M723 588.5H1319" stroke="#dedede" stroke-width="1" stroke-dasharray="1 1"/>
<path d="M723 568.5H1319" stroke="#dedede" stroke-width="1" stroke-dasharray="1 1"/>
<path d="M723 547.5H1319" stroke="#dedede" stroke-width="1" stroke-dasharray="1 1"/>
<path d="M723 526.5H1319" stroke="#dedede" stroke-width="1" stroke-dasharray="1 1"/>
<path d="M723 506.5H1319" stroke="#dedede" stroke-width="1" stroke-dasharray="1 1"/>
<path d="M723 486.5H1319" stroke="#dedede" stroke-width="1" stroke-dasharray="1 1"/>
<path d="M723 465.5H1319" stroke="#dedede" stroke-width="1" stroke-dasharray="1 1"/>
<path d="M723 444.5H1319" stroke="#dedede" stroke-width="1" stroke-dasharray="1 1"/>
<path d="M723 424.5H1319" stroke="#dedede" stroke-width="1" stroke-dasharray="1 1"/>
<path d="M723 404.5H1319" stroke="#dedede" stroke-width="1" stroke-dasharray="1 1"/>
<path d="M723 383.5H1319" stroke="#dedede" stroke-width="1" stroke-dasharray="1 1"/>
<path d="M723 362.5H1319" stroke="#dedede" stroke-width="1" stroke-dasharray="1 1"/>
<path d="M723 342.5H1319" stroke="#dedede" stroke-width="1" stroke-dasharray="1 1"/>
<path d="M723 322.5H1319" stroke="#dedede" stroke-width="1" stroke-dasharray="1 1"/>
<path d="M723 301.5H1319" stroke="#dedede" stroke-width="1" stroke-dasharray="1 1"/>
<path d="M723 280.5H1319" stroke="#dedede" stroke-width="1" stroke-dasharray="1 1"/>
<path d="M723 260.5H1319" stroke="#dedede" stroke-width="1" stroke-dasharray="1 1"/>
<path d="M1320 257V670.500H720" fill="none" stroke="#b6b6b6" stroke-width="1.600"/>
<path d="M716.500 257.300H1320.800" stroke="#b4b4b4" stroke-width="1.800"/>
<path d="M721.0 251.500V258" stroke="#6e6e6e" stroke-width="1.500"/>
<path d="M727.8 253.800V256.500" stroke="#bebebe" stroke-width="1.600"/>
<path d="M734.5 253.800V256.500" stroke="#bebebe" stroke-width="1.600"/>
<path d="M741.3 253.800V256.500" stroke="#bebebe" stroke-width="1.600"/>
<path d="M748.0 253.800V256.500" stroke="#bebebe" stroke-width="1.600"/>
<path d="M754.8 253.800V256.500" stroke="#bebebe" stroke-width="1.600"/>
<path d="M761.5 253.800V256.500" stroke="#bebebe" stroke-width="1.600"/>
<path d="M768.3 253.800V256.500" stroke="#bebebe" stroke-width="1.600"/>
<path d="M775.0 253.800V256.500" stroke="#bebebe" stroke-width="1.600"/>
<path d="M781.8 253.800V256.500" stroke="#bebebe" stroke-width="1.600"/>
<path d="M788.5 251.500V258" stroke="#6e6e6e" stroke-width="1.500"/>
<path d="M795.3 253.800V256.500" stroke="#bebebe" stroke-width="1.600"/>
<path d="M802.0 253.800V256.500" stroke="#bebebe" stroke-width="1.600"/>
<path d="M808.8 253.800V256.500" stroke="#bebebe" stroke-width="1.600"/>
<path d="M815.6 253.800V256.500" stroke="#bebebe" stroke-width="1.600"/>
<path d="M822.3 253.800V256.500" stroke="#bebebe" stroke-width="1.600"/>
<path d="M829.1 253.800V256.500" stroke="#bebebe" stroke-width="1.600"/>
<path d="M835.8 253.800V256.500" stroke="#bebebe" stroke-width="1.600"/>
<path d="M842.6 253.800V256.500" stroke="#bebebe" stroke-width="1.600"/>
<path d="M849.3 253.800V256.500" stroke="#bebebe" stroke-width="1.600"/>
<path d="M856.1 251.500V258" stroke="#6e6e6e" stroke-width="1.500"/>
<path d="M862.8 253.800V256.500" stroke="#bebebe" stroke-width="1.600"/>
<path d="M869.6 253.800V256.500" stroke="#bebebe" stroke-width="1.600"/>
<path d="M876.3 253.800V256.500" stroke="#bebebe" stroke-width="1.600"/>
<path d="M883.1 253.800V256.500" stroke="#bebebe" stroke-width="1.600"/>
<path d="M889.9 253.800V256.500" stroke="#bebebe" stroke-width="1.600"/>
<path d="M896.6 253.800V256.500" stroke="#bebebe" stroke-width="1.600"/>
<path d="M903.4 253.800V256.500" stroke="#bebebe" stroke-width="1.600"/>
<path d="M910.1 253.800V256.500" stroke="#bebebe" stroke-width="1.600"/>
<path d="M916.9 253.800V256.500" stroke="#bebebe" stroke-width="1.600"/>
<path d="M923.6 251.500V258" stroke="#6e6e6e" stroke-width="1.500"/>
<path d="M930.4 253.800V256.500" stroke="#bebebe" stroke-width="1.600"/>
<path d="M937.1 253.800V256.500" stroke="#bebebe" stroke-width="1.600"/>
<path d="M943.9 253.800V256.500" stroke="#bebebe" stroke-width="1.600"/>
<path d="M950.6 253.800V256.500" stroke="#bebebe" stroke-width="1.600"/>
<path d="M957.4 253.800V256.500" stroke="#bebebe" stroke-width="1.600"/>
<path d="M964.1 253.800V256.500" stroke="#bebebe" stroke-width="1.600"/>
<path d="M970.9 253.800V256.500" stroke="#bebebe" stroke-width="1.600"/>
<path d="M977.7 253.800V256.500" stroke="#bebebe" stroke-width="1.600"/>
<path d="M984.4 253.800V256.500" stroke="#bebebe" stroke-width="1.600"/>
<path d="M991.2 251.500V258" stroke="#6e6e6e" stroke-width="1.500"/>
<path d="M997.9 253.800V256.500" stroke="#bebebe" stroke-width="1.600"/>
<path d="M1004.7 253.800V256.500" stroke="#bebebe" stroke-width="1.600"/>
<path d="M1011.4 253.800V256.500" stroke="#bebebe" stroke-width="1.600"/>
<path d="M1018.2 253.800V256.500" stroke="#bebebe" stroke-width="1.600"/>
<path d="M1024.9 253.800V256.500" stroke="#bebebe" stroke-width="1.600"/>
<path d="M1031.7 253.800V256.500" stroke="#bebebe" stroke-width="1.600"/>
<path d="M1038.4 253.800V256.500" stroke="#bebebe" stroke-width="1.600"/>
<path d="M1045.2 253.800V256.500" stroke="#bebebe" stroke-width="1.600"/>
<path d="M1051.9 253.800V256.500" stroke="#bebebe" stroke-width="1.600"/>
<path d="M1058.7 251.500V258" stroke="#6e6e6e" stroke-width="1.500"/>
<path d="M1065.5 253.800V256.500" stroke="#bebebe" stroke-width="1.600"/>
<path d="M1072.2 253.800V256.500" stroke="#bebebe" stroke-width="1.600"/>
<path d="M1079.0 253.800V256.500" stroke="#bebebe" stroke-width="1.600"/>
<path d="M1085.7 253.800V256.500" stroke="#bebebe" stroke-width="1.600"/>
<path d="M1092.5 253.800V256.500" stroke="#bebebe" stroke-width="1.600"/>
<path d="M1099.2 253.800V256.500" stroke="#bebebe" stroke-width="1.600"/>
<path d="M1106.0 253.800V256.500" stroke="#bebebe" stroke-width="1.600"/>
<path d="M1112.7 253.800V256.500" stroke="#bebebe" stroke-width="1.600"/>
<path d="M1119.5 253.800V256.500" stroke="#bebebe" stroke-width="1.600"/>
<path d="M1126.2 251.500V258" stroke="#6e6e6e" stroke-width="1.500"/>
<path d="M1133.0 253.800V256.500" stroke="#bebebe" stroke-width="1.600"/>
<path d="M1139.7 253.800V256.500" stroke="#bebebe" stroke-width="1.600"/>
<path d="M1146.5 253.800V256.500" stroke="#bebebe" stroke-width="1.600"/>
<path d="M1153.3 253.800V256.500" stroke="#bebebe" stroke-width="1.600"/>
<path d="M1160.0 253.800V256.500" stroke="#bebebe" stroke-width="1.600"/>
<path d="M1166.8 253.800V256.500" stroke="#bebebe" stroke-width="1.600"/>
<path d="M1173.5 253.800V256.500" stroke="#bebebe" stroke-width="1.600"/>
<path d="M1180.3 253.800V256.500" stroke="#bebebe" stroke-width="1.600"/>
<path d="M1187.0 253.800V256.500" stroke="#bebebe" stroke-width="1.600"/>
<path d="M1193.8 251.500V258" stroke="#6e6e6e" stroke-width="1.500"/>
<path d="M1200.5 253.800V256.500" stroke="#bebebe" stroke-width="1.600"/>
<path d="M1207.3 253.800V256.500" stroke="#bebebe" stroke-width="1.600"/>
<path d="M1214.0 253.800V256.500" stroke="#bebebe" stroke-width="1.600"/>
<path d="M1220.8 253.800V256.500" stroke="#bebebe" stroke-width="1.600"/>
<path d="M1227.5 253.800V256.500" stroke="#bebebe" stroke-width="1.600"/>
<path d="M1234.3 253.800V256.500" stroke="#bebebe" stroke-width="1.600"/>
<path d="M1241.1 253.800V256.500" stroke="#bebebe" stroke-width="1.600"/>
<path d="M1247.8 253.800V256.500" stroke="#bebebe" stroke-width="1.600"/>
<path d="M1254.6 253.800V256.500" stroke="#bebebe" stroke-width="1.600"/>
<path d="M1261.3 251.500V258" stroke="#6e6e6e" stroke-width="1.500"/>
<path d="M1268.1 253.800V256.500" stroke="#bebebe" stroke-width="1.600"/>
<path d="M1274.8 253.800V256.500" stroke="#bebebe" stroke-width="1.600"/>
<path d="M1281.6 253.800V256.500" stroke="#bebebe" stroke-width="1.600"/>
<path d="M1288.3 253.800V256.500" stroke="#bebebe" stroke-width="1.600"/>
<path d="M1295.1 253.800V256.500" stroke="#bebebe" stroke-width="1.600"/>
<path d="M1301.8 253.800V256.500" stroke="#bebebe" stroke-width="1.600"/>
<path d="M1308.6 253.800V256.500" stroke="#bebebe" stroke-width="1.600"/>
<path d="M1315.4 253.800V256.500" stroke="#bebebe" stroke-width="1.600"/>
<rect x="716.500" y="258" width="4" height="411.500" fill="#c2c2c2"/>
<path d="M718.500 659.8H720.500" stroke="#ececec" stroke-width="1"/>
<path d="M716.500 649.5H721" stroke="#6e6e6e" stroke-width="1.300"/>
<path d="M718.500 639.2H720.500" stroke="#ececec" stroke-width="1"/>
<path d="M716.500 629.0H721" stroke="#6e6e6e" stroke-width="1.300"/>
<path d="M718.500 618.8H720.500" stroke="#ececec" stroke-width="1"/>
<path d="M716.500 608.5H721" stroke="#6e6e6e" stroke-width="1.300"/>
<path d="M718.500 598.2H720.500" stroke="#ececec" stroke-width="1"/>
<path d="M716.500 588.0H721" stroke="#6e6e6e" stroke-width="1.300"/>
<path d="M718.500 577.8H720.500" stroke="#ececec" stroke-width="1"/>
<path d="M716.500 567.5H721" stroke="#6e6e6e" stroke-width="1.300"/>
<path d="M718.500 557.2H720.500" stroke="#ececec" stroke-width="1"/>
<path d="M716.500 547.0H721" stroke="#6e6e6e" stroke-width="1.300"/>
<path d="M718.500 536.8H720.500" stroke="#ececec" stroke-width="1"/>
<path d="M716.500 526.5H721" stroke="#6e6e6e" stroke-width="1.300"/>
<path d="M718.500 516.2H720.500" stroke="#ececec" stroke-width="1"/>
<path d="M716.500 506.0H721" stroke="#6e6e6e" stroke-width="1.300"/>
<path d="M718.500 495.8H720.500" stroke="#ececec" stroke-width="1"/>
<path d="M716.500 485.5H721" stroke="#6e6e6e" stroke-width="1.300"/>
<path d="M718.500 475.2H720.500" stroke="#ececec" stroke-width="1"/>
<path d="M716.500 465.0H721" stroke="#6e6e6e" stroke-width="1.300"/>
<path d="M718.500 454.8H720.500" stroke="#ececec" stroke-width="1"/>
<path d="M716.500 444.5H721" stroke="#6e6e6e" stroke-width="1.300"/>
<path d="M718.500 434.2H720.500" stroke="#ececec" stroke-width="1"/>
<path d="M716.500 424.0H721" stroke="#6e6e6e" stroke-width="1.300"/>
<path d="M718.500 413.8H720.500" stroke="#ececec" stroke-width="1"/>
<path d="M716.500 403.5H721" stroke="#6e6e6e" stroke-width="1.300"/>
<path d="M718.500 393.2H720.500" stroke="#ececec" stroke-width="1"/>
<path d="M716.500 383.0H721" stroke="#6e6e6e" stroke-width="1.300"/>
<path d="M718.500 372.8H720.500" stroke="#ececec" stroke-width="1"/>
<path d="M716.500 362.5H721" stroke="#6e6e6e" stroke-width="1.300"/>
<path d="M718.500 352.2H720.500" stroke="#ececec" stroke-width="1"/>
<path d="M716.500 342.0H721" stroke="#6e6e6e" stroke-width="1.300"/>
<path d="M718.500 331.8H720.500" stroke="#ececec" stroke-width="1"/>
<path d="M716.500 321.5H721" stroke="#6e6e6e" stroke-width="1.300"/>
<path d="M718.500 311.2H720.500" stroke="#ececec" stroke-width="1"/>
<path d="M716.500 301.0H721" stroke="#6e6e6e" stroke-width="1.300"/>
<path d="M718.500 290.8H720.500" stroke="#ececec" stroke-width="1"/>
<path d="M716.500 280.5H721" stroke="#6e6e6e" stroke-width="1.300"/>
<path d="M718.500 270.2H720.500" stroke="#ececec" stroke-width="1"/>
<path d="M716.500 260.0H721" stroke="#6e6e6e" stroke-width="1.300"/>
<path d="M721.200 257V670.500" stroke="#747474" stroke-width="1.600"/>
<text x="723.9" y="245.500" text-anchor="middle" font-size="11.400" fill="#1c1c1c" letter-spacing="1.300">0</text>
<text x="791.4" y="245.500" text-anchor="middle" font-size="11.400" fill="#1c1c1c" letter-spacing="1.300">0,2</text>
<text x="859.0" y="245.500" text-anchor="middle" font-size="11.400" fill="#1c1c1c" letter-spacing="1.300">0,4</text>
<text x="926.5" y="245.500" text-anchor="middle" font-size="11.400" fill="#1c1c1c" letter-spacing="1.300">0,6</text>
<text x="994.1" y="245.500" text-anchor="middle" font-size="11.400" fill="#1c1c1c" letter-spacing="1.300">0,8</text>
<text x="1061.6" y="245.500" text-anchor="middle" font-size="11.400" fill="#1c1c1c" letter-spacing="1.300">1</text>
<text x="1129.1" y="245.500" text-anchor="middle" font-size="11.400" fill="#1c1c1c" letter-spacing="1.300">1,2</text>
<text x="1196.7" y="245.500" text-anchor="middle" font-size="11.400" fill="#1c1c1c" letter-spacing="1.300">1,4</text>
<text x="1264.2" y="245.500" text-anchor="middle" font-size="11.400" fill="#1c1c1c" letter-spacing="1.300">1,6</text>
<text x="712.700" y="653.8" text-anchor="end" font-size="11.400" fill="#1c1c1c" letter-spacing=".9">2</text>
<text x="712.700" y="633.3" text-anchor="end" font-size="11.400" fill="#1c1c1c" letter-spacing=".9">4</text>
<text x="712.700" y="612.8" text-anchor="end" font-size="11.400" fill="#1c1c1c" letter-spacing=".9">6</text>
<text x="712.700" y="592.3" text-anchor="end" font-size="11.400" fill="#1c1c1c" letter-spacing=".9">8</text>
<text x="712.700" y="571.8" text-anchor="end" font-size="11.400" fill="#1c1c1c" letter-spacing=".9">10</text>
<text x="712.700" y="551.3" text-anchor="end" font-size="11.400" fill="#1c1c1c" letter-spacing=".9">12</text>
<text x="712.700" y="530.8" text-anchor="end" font-size="11.400" fill="#1c1c1c" letter-spacing=".9">14</text>
<text x="712.700" y="510.3" text-anchor="end" font-size="11.400" fill="#1c1c1c" letter-spacing=".9">16</text>
<text x="712.700" y="489.8" text-anchor="end" font-size="11.400" fill="#1c1c1c" letter-spacing=".9">18</text>
<text x="712.700" y="469.3" text-anchor="end" font-size="11.400" fill="#1c1c1c" letter-spacing=".9">20</text>
<text x="712.700" y="448.8" text-anchor="end" font-size="11.400" fill="#1c1c1c" letter-spacing=".9">22</text>
<text x="712.700" y="428.3" text-anchor="end" font-size="11.400" fill="#1c1c1c" letter-spacing=".9">24</text>
<text x="712.700" y="407.8" text-anchor="end" font-size="11.400" fill="#1c1c1c" letter-spacing=".9">26</text>
<text x="712.700" y="387.3" text-anchor="end" font-size="11.400" fill="#1c1c1c" letter-spacing=".9">28</text>
<text x="712.700" y="366.8" text-anchor="end" font-size="11.400" fill="#1c1c1c" letter-spacing=".9">30</text>
<text x="712.700" y="346.3" text-anchor="end" font-size="11.400" fill="#1c1c1c" letter-spacing=".9">32</text>
<text x="712.700" y="325.8" text-anchor="end" font-size="11.400" fill="#1c1c1c" letter-spacing=".9">34</text>
<text x="712.700" y="305.3" text-anchor="end" font-size="11.400" fill="#1c1c1c" letter-spacing=".9">36</text>
<text x="712.700" y="284.8" text-anchor="end" font-size="11.400" fill="#1c1c1c" letter-spacing=".9">38</text>
<text x="712.700" y="264.3" text-anchor="end" font-size="11.400" fill="#1c1c1c" letter-spacing=".9">40</text>
<path d="M1272.7 359.1L1276.5 355.4L1280.3 359.1L1276.5 362.8z" fill="#0808cc" stroke="#000052" stroke-width=".9"/>
<path d="M1287.2 556.3L1291.0 552.6L1294.8 556.3L1291.0 560.0z" fill="#0808cc" stroke="#000052" stroke-width=".9"/>
<path d="M1211.6 663.5L1215.4 659.8L1219.2 663.5L1215.4 667.2z" fill="#0808cc" stroke="#000052" stroke-width=".9"/>
<path d="M1263.6 269.2L1267.4 265.5L1271.2 269.2L1267.4 272.9z" fill="#0808cc" stroke="#000052" stroke-width=".9"/>
<path d="M1278.8 446.7L1282.6 443.0L1286.4 446.7L1282.6 450.4z" fill="#0808cc" stroke="#000052" stroke-width=".9"/>
<path d="M1265.3 279.1L1269.1 275.4L1272.9 279.1L1269.1 282.8z" fill="#0808cc" stroke="#000052" stroke-width=".9"/>
<path d="M1232.9 559.9L1236.7 556.2L1240.5 559.9L1236.7 563.6z" fill="#0808cc" stroke="#000052" stroke-width=".9"/>
<path d="M1263.9 270.9L1267.7 267.2L1271.5 270.9L1267.7 274.6z" fill="#0808cc" stroke="#000052" stroke-width=".9"/>
<path d="M1252.8 298.9L1256.6 295.2L1260.4 298.9L1256.6 302.6z" fill="#0808cc" stroke="#000052" stroke-width=".9"/>
<path d="M1235.6 529.2L1239.4 525.5L1243.2 529.2L1239.4 532.9z" fill="#0808cc" stroke="#000052" stroke-width=".9"/>
<path d="M1260.6 261.2L1264.4 257.5L1268.2 261.2L1264.4 264.9z" fill="#0808cc" stroke="#000052" stroke-width=".9"/>
<path d="M1260.2 261.1L1264.0 257.4L1267.8 261.1L1264.0 264.8z" fill="#0808cc" stroke="#000052" stroke-width=".9"/>
<path d="M1242.7 431.9L1246.5 428.2L1250.3 431.9L1246.5 435.6z" fill="#0808cc" stroke="#000052" stroke-width=".9"/>
<path d="M1266.3 286.8L1270.1 283.1L1273.9 286.8L1270.1 290.5z" fill="#0808cc" stroke="#000052" stroke-width=".9"/>
<path d="M1269.0 312.8L1272.8 309.1L1276.6 312.8L1272.8 316.5z" fill="#0808cc" stroke="#000052" stroke-width=".9"/>
<path d="M1245.4 392.4L1249.2 388.7L1253.0 392.4L1249.2 396.1z" fill="#0808cc" stroke="#000052" stroke-width=".9"/>
<path d="M1270.7 332.6L1274.5 328.9L1278.3 332.6L1274.5 336.3z" fill="#0808cc" stroke="#000052" stroke-width=".9"/>
<path d="M1233.5 552.6L1237.3 548.9L1241.1 552.6L1237.3 556.3z" fill="#0808cc" stroke="#000052" stroke-width=".9"/>
<path d="M1256.8 269.2L1260.6 265.5L1264.4 269.2L1260.6 272.9z" fill="#0808cc" stroke="#000052" stroke-width=".9"/>
<path d="M1282.5 498.9L1286.3 495.2L1290.1 498.9L1286.3 502.6z" fill="#0808cc" stroke="#000052" stroke-width=".9"/>
<path d="M1257.9 265.1L1261.7 261.4L1265.5 265.1L1261.7 268.8z" fill="#0808cc" stroke="#000052" stroke-width=".9"/>
<path d="M1250.4 324.4L1254.2 320.7L1258.0 324.4L1254.2 328.1z" fill="#0808cc" stroke="#000052" stroke-width=".9"/>
<path d="M1232.5 563.5L1236.3 559.8L1240.1 563.5L1236.3 567.2z" fill="#0808cc" stroke="#000052" stroke-width=".9"/>
<path d="M1244.0 412.1L1247.8 408.4L1251.6 412.1L1247.8 415.8z" fill="#0808cc" stroke="#000052" stroke-width=".9"/>
<path d="M1264.9 276.8L1268.7 273.1L1272.5 276.8L1268.7 280.5z" fill="#0808cc" stroke="#000052" stroke-width=".9"/>
<path d="M1215.3 658.1L1219.1 654.4L1222.9 658.1L1219.1 661.8z" fill="#0808cc" stroke="#000052" stroke-width=".9"/>
<path d="M1220.0 645.9L1223.8 642.2L1227.6 645.9L1223.8 649.6z" fill="#0808cc" stroke="#000052" stroke-width=".9"/>
<path d="M1274.1 377.9L1277.9 374.2L1281.7 377.9L1277.9 381.6z" fill="#0808cc" stroke="#000052" stroke-width=".9"/>
<path d="M1274.7 387.5L1278.5 383.8L1282.3 387.5L1278.5 391.2z" fill="#0808cc" stroke="#000052" stroke-width=".9"/>
<path d="M1264.9 276.8L1268.7 273.1L1272.5 276.8L1268.7 280.5z" fill="#0808cc" stroke="#000052" stroke-width=".9"/>
<path d="M1285.5 537.3L1289.3 533.6L1293.1 537.3L1289.3 541.0z" fill="#0808cc" stroke="#000052" stroke-width=".9"/>
<path d="M1268.7 309.2L1272.5 305.5L1276.3 309.2L1272.5 312.9z" fill="#0808cc" stroke="#000052" stroke-width=".9"/>
<path d="M1245.4 392.4L1249.2 388.7L1253.0 392.4L1249.2 396.1z" fill="#0808cc" stroke="#000052" stroke-width=".9"/>
<path d="M1247.1 368.4L1250.9 364.7L1254.7 368.4L1250.9 372.1z" fill="#0808cc" stroke="#000052" stroke-width=".9"/>
<path d="M1281.8 489.8L1285.6 486.1L1289.4 489.8L1285.6 493.5z" fill="#0808cc" stroke="#000052" stroke-width=".9"/>
<path d="M1255.5 277.0L1259.3 273.3L1263.1 277.0L1259.3 280.7z" fill="#0808cc" stroke="#000052" stroke-width=".9"/>
<path d="M1254.9 281.0L1258.7 277.3L1262.5 281.0L1258.7 284.7z" fill="#0808cc" stroke="#000052" stroke-width=".9"/>
<path d="M1253.3 294.0L1257.1 290.3L1260.9 294.0L1257.1 297.7z" fill="#0808cc" stroke="#000052" stroke-width=".9"/>
<path d="M1252.3 304.0L1256.1 300.3L1259.9 304.0L1256.1 307.7z" fill="#0808cc" stroke="#000052" stroke-width=".9"/>
<path d="M1251.7 310.0L1255.5 306.3L1259.3 310.0L1255.5 313.7z" fill="#0808cc" stroke="#000052" stroke-width=".9"/>
<path d="M1250.2 327.5L1254.0 323.8L1257.8 327.5L1254.0 331.2z" fill="#0808cc" stroke="#000052" stroke-width=".9"/>
<path d="M1249.1 341.0L1252.9 337.3L1256.7 341.0L1252.9 344.7z" fill="#0808cc" stroke="#000052" stroke-width=".9"/>
<path d="M1245.9 384.0L1249.7 380.3L1253.5 384.0L1249.7 387.7z" fill="#0808cc" stroke="#000052" stroke-width=".9"/>
<path d="M1244.8 401.0L1248.6 397.3L1252.4 401.0L1248.6 404.7z" fill="#0808cc" stroke="#000052" stroke-width=".9"/>
<path d="M1244.6 404.0L1248.4 400.3L1252.2 404.0L1248.4 407.7z" fill="#0808cc" stroke="#000052" stroke-width=".9"/>
<path d="M1242.9 428.0L1246.7 424.3L1250.5 428.0L1246.7 431.7z" fill="#0808cc" stroke="#000052" stroke-width=".9"/>
<path d="M1242.1 440.5L1245.9 436.8L1249.7 440.5L1245.9 444.2z" fill="#0808cc" stroke="#000052" stroke-width=".9"/>
<path d="M1236.3 520.0L1240.1 516.3L1243.9 520.0L1240.1 523.7z" fill="#0808cc" stroke="#000052" stroke-width=".9"/>
<path d="M1234.7 539.0L1238.5 535.3L1242.3 539.0L1238.5 542.7z" fill="#0808cc" stroke="#000052" stroke-width=".9"/>
<path d="M1232.2 567.0L1236.0 563.3L1239.8 567.0L1236.0 570.7z" fill="#0808cc" stroke="#000052" stroke-width=".9"/>
<path d="M1267.1 293.8L1270.9 290.1L1274.7 293.8L1270.9 297.5z" fill="#0808cc" stroke="#000052" stroke-width=".9"/>
<path d="M1267.6 298.2L1271.4 294.5L1275.2 298.2L1271.4 301.9z" fill="#0808cc" stroke="#000052" stroke-width=".9"/>
<path d="M1268.4 306.8L1272.2 303.1L1276.0 306.8L1272.2 310.5z" fill="#0808cc" stroke="#000052" stroke-width=".9"/>
<path d="M1269.2 315.5L1273.0 311.8L1276.8 315.5L1273.0 319.2z" fill="#0808cc" stroke="#000052" stroke-width=".9"/>
<path d="M1270.9 335.2L1274.7 331.5L1278.5 335.2L1274.7 338.9z" fill="#0808cc" stroke="#000052" stroke-width=".9"/>
<path d="M1271.2 339.0L1275.0 335.3L1278.8 339.0L1275.0 342.7z" fill="#0808cc" stroke="#000052" stroke-width=".9"/>
<path d="M1271.5 342.9L1275.3 339.2L1279.1 342.9L1275.3 346.6z" fill="#0808cc" stroke="#000052" stroke-width=".9"/>
<path d="M1272.2 352.0L1276.0 348.3L1279.8 352.0L1276.0 355.7z" fill="#0808cc" stroke="#000052" stroke-width=".9"/>
<path d="M1272.9 361.6L1276.7 357.9L1280.5 361.6L1276.7 365.3z" fill="#0808cc" stroke="#000052" stroke-width=".9"/>
<path d="M1273.5 369.8L1277.3 366.1L1281.1 369.8L1277.3 373.5z" fill="#0808cc" stroke="#000052" stroke-width=".9"/>
<path d="M1275.1 392.9L1278.9 389.2L1282.7 392.9L1278.9 396.6z" fill="#0808cc" stroke="#000052" stroke-width=".9"/>
<path d="M1276.2 408.8L1280.0 405.1L1283.8 408.8L1280.0 412.5z" fill="#0808cc" stroke="#000052" stroke-width=".9"/>
<path d="M1277.0 420.8L1280.8 417.1L1284.6 420.8L1280.8 424.5z" fill="#0808cc" stroke="#000052" stroke-width=".9"/>
<path d="M1277.1 421.5L1280.9 417.8L1284.7 421.5L1280.9 425.2z" fill="#0808cc" stroke="#000052" stroke-width=".9"/>
<path d="M1278.1 436.7L1281.9 433.0L1285.7 436.7L1281.9 440.4z" fill="#0808cc" stroke="#000052" stroke-width=".9"/>
<path d="M1279.4 455.9L1283.2 452.2L1287.0 455.9L1283.2 459.6z" fill="#0808cc" stroke="#000052" stroke-width=".9"/>
<path d="M1280.8 475.8L1284.6 472.1L1288.4 475.8L1284.6 479.5z" fill="#0808cc" stroke="#000052" stroke-width=".9"/>
<path d="M1283.1 506.5L1286.9 502.8L1290.7 506.5L1286.9 510.2z" fill="#0808cc" stroke="#000052" stroke-width=".9"/>
<path d="M1283.2 507.5L1287.0 503.8L1290.8 507.5L1287.0 511.2z" fill="#0808cc" stroke="#000052" stroke-width=".9"/>
<path d="M1283.8 516.0L1287.6 512.3L1291.4 516.0L1287.6 519.7z" fill="#0808cc" stroke="#000052" stroke-width=".9"/>
<path d="M1286.3 546.0L1290.1 542.3L1293.9 546.0L1290.1 549.7z" fill="#0808cc" stroke="#000052" stroke-width=".9"/>
<path d="M1286.4 547.0L1290.2 543.3L1294.0 547.0L1290.2 550.7z" fill="#0808cc" stroke="#000052" stroke-width=".9"/>
<path d="M1292.9 606.8L1296.7 603.1L1300.5 606.8L1296.7 610.5z" fill="#0808cc" stroke="#000052" stroke-width=".9"/>
<path d="M1256.5 270.9L1260.3 267.2L1264.1 270.9L1260.3 274.6z" fill="#0808cc" stroke="#000052" stroke-width=".9"/>
<path d="M1257.2 267.7L1261.0 264.0L1264.8 267.7L1261.0 271.4z" fill="#0808cc" stroke="#000052" stroke-width=".9"/>
<path d="M1257.5 266.3L1261.3 262.6L1265.1 266.3L1261.3 270.0z" fill="#0808cc" stroke="#000052" stroke-width=".9"/>
<path d="M1257.5 266.3L1261.3 262.6L1265.1 266.3L1261.3 270.0z" fill="#0808cc" stroke="#000052" stroke-width=".9"/>
<path d="M1258.2 264.1L1262.0 260.4L1265.8 264.1L1262.0 267.8z" fill="#0808cc" stroke="#000052" stroke-width=".9"/>
<path d="M1258.5 263.2L1262.3 259.5L1266.1 263.2L1262.3 266.9z" fill="#0808cc" stroke="#000052" stroke-width=".9"/>
<path d="M1258.9 262.4L1262.7 258.7L1266.5 262.4L1262.7 266.1z" fill="#0808cc" stroke="#000052" stroke-width=".9"/>
<path d="M1259.2 261.9L1263.0 258.2L1266.8 261.9L1263.0 265.6z" fill="#0808cc" stroke="#000052" stroke-width=".9"/>
<path d="M1259.5 261.5L1263.3 257.8L1267.1 261.5L1263.3 265.2z" fill="#0808cc" stroke="#000052" stroke-width=".9"/>
<path d="M1259.9 261.2L1263.7 257.5L1267.5 261.2L1263.7 264.9z" fill="#0808cc" stroke="#000052" stroke-width=".9"/>
<path d="M1260.9 261.5L1264.7 257.8L1268.5 261.5L1264.7 265.2z" fill="#0808cc" stroke="#000052" stroke-width=".9"/>
<path d="M1261.2 261.9L1265.0 258.2L1268.8 261.9L1265.0 265.6z" fill="#0808cc" stroke="#000052" stroke-width=".9"/>
<path d="M1261.6 262.4L1265.4 258.7L1269.2 262.4L1265.4 266.1z" fill="#0808cc" stroke="#000052" stroke-width=".9"/>
<path d="M1261.9 263.2L1265.7 259.5L1269.5 263.2L1265.7 266.9z" fill="#0808cc" stroke="#000052" stroke-width=".9"/>
<path d="M1262.2 264.1L1266.0 260.4L1269.8 264.1L1266.0 267.8z" fill="#0808cc" stroke="#000052" stroke-width=".9"/>
<path d="M1262.6 265.1L1266.4 261.4L1270.2 265.1L1266.4 268.8z" fill="#0808cc" stroke="#000052" stroke-width=".9"/>
<path d="M1262.9 266.3L1266.7 262.6L1270.5 266.3L1266.7 270.0z" fill="#0808cc" stroke="#000052" stroke-width=".9"/>
<path d="M1263.3 267.7L1267.1 264.0L1270.9 267.7L1267.1 271.4z" fill="#0808cc" stroke="#000052" stroke-width=".9"/>
<path d="M1264.1 271.8L1267.9 268.1L1271.7 271.8L1267.9 275.5z" fill="#0808cc" stroke="#000052" stroke-width=".9"/>
<path d="M1264.4 273.7L1268.2 270.0L1272.0 273.7L1268.2 277.4z" fill="#0808cc" stroke="#000052" stroke-width=".9"/>
<path d="M1264.6 274.7L1268.4 271.0L1272.2 274.7L1268.4 278.4z" fill="#0808cc" stroke="#000052" stroke-width=".9"/>
<path d="M1265.1 278.0L1268.9 274.3L1272.7 278.0L1268.9 281.7z" fill="#0808cc" stroke="#000052" stroke-width=".9"/>
<path d="M1265.6 281.5L1269.4 277.8L1273.2 281.5L1269.4 285.2z" fill="#0808cc" stroke="#000052" stroke-width=".9"/>
<path d="M1265.8 282.8L1269.6 279.1L1273.4 282.8L1269.6 286.5z" fill="#0808cc" stroke="#000052" stroke-width=".9"/>
<path d="M1266.0 284.1L1269.8 280.4L1273.6 284.1L1269.8 287.8z" fill="#0808cc" stroke="#000052" stroke-width=".9"/>
<path d="M1262.1 263.6L1265.9 259.9L1269.7 263.6L1265.9 267.3z" fill="#0808cc" stroke="#000052" stroke-width=".9"/>
<path d="M1213.4 665.5L1214.2 664.7L1215.1 663.9L1215.9 663.0L1216.7 661.9L1217.6 660.7L1218.4 659.3L1219.3 657.8L1220.1 656.1L1221.0 654.2L1221.8 652.0L1222.7 649.7L1223.5 647.0L1224.3 644.2L1225.2 641.0L1226.0 637.5L1226.9 633.6L1227.7 629.5L1228.6 624.9L1229.4 620.0L1230.3 614.7L1231.1 608.9L1231.9 602.8L1232.8 596.1L1233.6 589.1L1234.5 581.6L1235.3 573.6L1236.2 565.2L1237.0 556.3L1237.8 547.0L1238.7 537.3L1239.5 527.1L1240.4 516.5L1241.2 505.6L1242.1 494.4L1242.9 482.8L1243.8 471.0L1244.6 458.9L1245.4 446.7L1246.3 434.4L1247.1 422.0L1248.0 409.6L1248.8 397.3L1249.7 385.1L1250.5 373.1L1251.4 361.4L1252.2 350.0L1253.0 339.0L1253.9 328.5L1254.7 318.5L1255.6 309.2L1256.4 300.5L1257.3 292.6L1258.1 285.4L1259.0 279.1L1259.8 273.7L1260.6 269.2L1261.5 265.7L1262.3 263.2L1263.2 261.6L1264.0 261.1L1264.9 261.6L1265.7 263.2L1266.6 265.7L1267.4 269.2L1268.2 273.7L1269.1 279.1L1269.9 285.4L1270.8 292.6L1271.6 300.5L1272.5 309.2L1273.3 318.5L1274.2 328.5L1275.0 339.0L1275.8 350.0L1276.7 361.4L1277.5 373.1L1278.4 385.1L1279.2 397.3L1280.1 409.6L1280.9 422.0L1281.8 434.4L1282.6 446.7L1283.4 458.9L1284.3 471.0L1285.1 482.8L1286.0 494.4L1286.8 505.6L1287.7 516.5L1288.5 527.1L1289.3 537.3L1290.2 547.0L1291.0 556.3L1291.9 565.2L1292.7 573.6L1293.6 581.6L1294.4 589.1L1295.3 596.1L1296.1 602.8L1296.9 608.9L1297.8 614.7L1298.6 620.0L1299.5 624.9L1300.3 629.5L1301.2 633.6L1302.0 637.5L1302.9 641.0L1303.7 644.2L1304.5 647.0L1305.4 649.7L1306.2 652.0L1307.1 654.2L1307.9 656.1L1308.8 657.8L1309.6 659.3L1310.5 660.7L1311.3 661.9L1312.1 663.0L1313.0 663.9L1313.8 664.7L1314.7 665.5" fill="none" stroke="#9a9af2" stroke-width="1.100"/>
</svg></div>
<div class="abs" style="left:0;top:726px;width:1364px;height:2px;background:#cfd2d7"></div>
</div>
</body></html>
